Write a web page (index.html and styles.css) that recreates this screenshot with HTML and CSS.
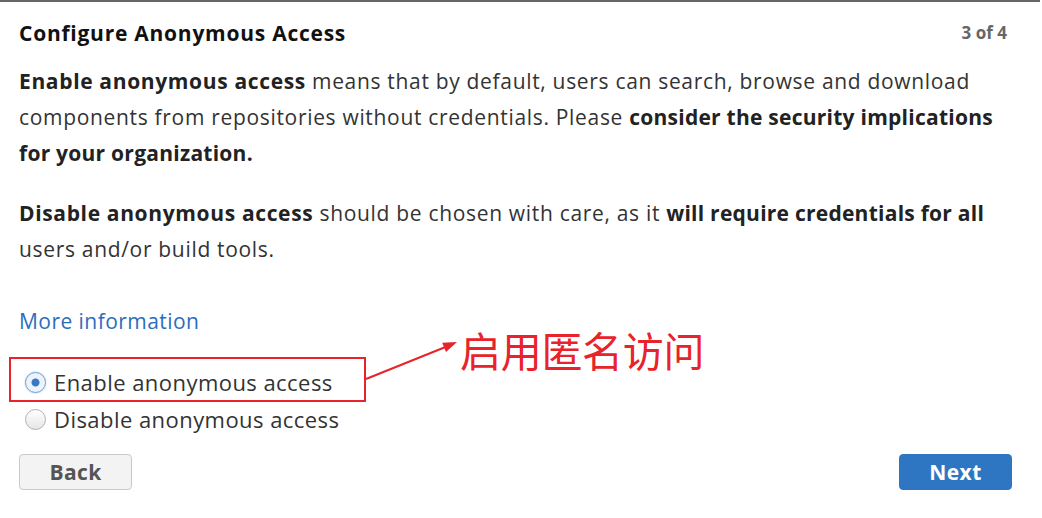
FILE: index.html
```html
<!DOCTYPE html>
<html>
<head>
<meta charset="utf-8">
<link rel="stylesheet" href="styles.css">
</head>
<body>
<div class="panel">
  <div class="header">
    <h1 class="title">Configure Anonymous Access</h1>
    <span class="step">3 of 4</span>
  </div>
  <p class="para"><b class="term">Enable anonymous access</b> means that by default, users can search, browse and download components from repositories without credentials. Please <b>consider the security implications for your organization.</b></p>
  <p class="para para2"><b class="term">Disable anonymous access</b> should be chosen with care, as it <b>will require credentials for all</b> users and/or build tools.</p>
  <a class="more" href="#">More information</a>
  <div class="options">
    <label class="option"><span class="radio checked"></span>Enable anonymous access</label>
    <label class="option"><span class="radio"></span>Disable anonymous access</label>
    <div class="highlight"></div>
    <svg class="arrow" width="100" height="50" viewBox="0 0 100 50"><line x1="2" y1="40" x2="84" y2="7" stroke="#e8232b" stroke-width="2"/><polygon points="93,3 78.2,3.8 82,13" fill="#e8232b"/></svg>
    <span class="note">启用匿名访问</span>
  </div>
  <div class="buttons">
    <button class="btn btn-back">Back</button>
    <button class="btn btn-next">Next</button>
  </div>
</div>
</body>
</html>
```
FILE: styles.css
```css
html, body { margin: 0; padding: 0; background: #fff; }
body { font-family: "Open Sans", "Liberation Sans", sans-serif; color: #333; }
.panel { width: 1040px; height: 516px; border-top: 2px solid #666; box-sizing: border-box; padding: 0 28px 0 19px; }
.header { display: flex; justify-content: space-between; align-items: center; height: 61px; }
.title { margin: 0; font-size: 21px; font-weight: 700; color: #111; letter-spacing: 0.75px; }
.step { font-size: 17px; font-weight: 700; color: #666; margin-right: 5px; }
.para { margin: 0; font-size: 21px; line-height: 36px; color: #333; letter-spacing: 0.68px; }
.para b { color: #222; letter-spacing: 0.25px; }
.para b.term { letter-spacing: 0.65px; }
.para2 { margin-top: 24px; }
.more { display: block; margin-top: 36px; font-size: 21px; line-height: 36px; color: #2a6ebb; text-decoration: none; letter-spacing: 0.45px; }
.options { position: relative; margin-top: 24.5px; }
.option { display: flex; align-items: center; font-size: 22px; height: 37px; color: #333; letter-spacing: 0.45px; }
.radio { width: 21px; height: 21px; border: 1px solid #b0b0b0; border-radius: 50%; margin: 0 8px 0 6px; box-sizing: border-box; background: linear-gradient(#fff, #e6e6e6); }
.radio.checked { border: 1px solid #6b9bd6; background: radial-gradient(circle, #3a78c4 0 3.5px, #eef3fa 4.5px); box-shadow: 0 0 2px #a6c6ec; }
.highlight { position: absolute; left: -10px; top: -7px; width: 357px; height: 45px; border: 2px solid #e8232b; box-sizing: border-box; }
.arrow { position: absolute; left: 345px; top: -25px; }
.note { position: absolute; left: 441px; top: -43px; font-family: "Noto Sans CJK SC", sans-serif; font-size: 41px; color: #e8232b; line-height: 56px; letter-spacing: -0.3px; }
.buttons { display: flex; justify-content: space-between; margin-top: 16.5px; }
.btn { width: 113px; height: 36px; border-radius: 4px; font-family: inherit; font-size: 21px; font-weight: 700; cursor: pointer; letter-spacing: 0.4px; padding: 0; }
.btn-back { background: #f3f3f3; border: 1px solid #c9c9c9; color: #555; }
.btn-next { background: #2f76c2; border: 1px solid #2f76c2; color: #fff; }
```
